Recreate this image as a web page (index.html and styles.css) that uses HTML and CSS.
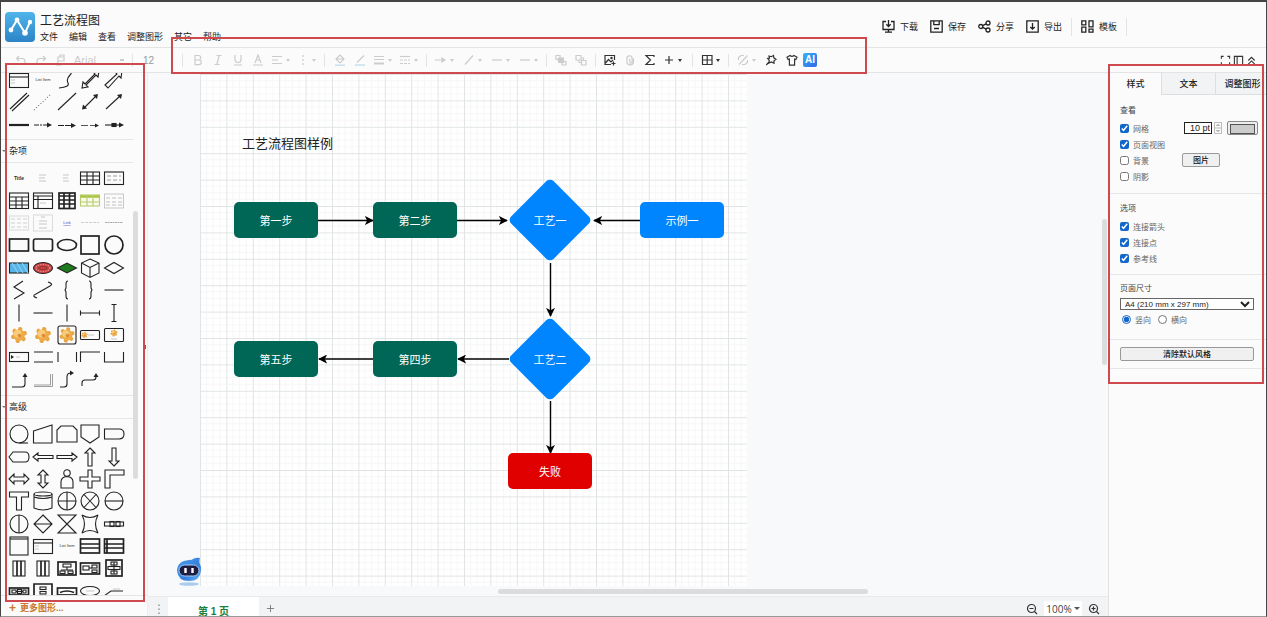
FILE: index.html
```html
<!DOCTYPE html>
<html lang="zh-CN">
<head>
<meta charset="utf-8">
<title>工艺流程图</title>
<link rel="stylesheet" href="styles.css">
</head>
<body>
<div class="app">
  <header class="header">
    <svg class="logo" viewBox="0 0 30 30" aria-hidden="true">
      <defs><linearGradient id="logoFill" x1="0" y1="0" x2="0" y2="1"><stop offset="0" stop-color="#4fb5ea"/><stop offset="1" stop-color="#2b84c6"/></linearGradient></defs>
      <rect width="30" height="30" rx="4" fill="url(#logoFill)"/>
      <path d="M6 18 12 8l8 13 5-11" fill="none" stroke="#fff" stroke-width="2"/>
      <g fill="#fff"><circle cx="6" cy="18" r="2.4"/><circle cx="12" cy="8" r="2.4"/><circle cx="20" cy="21" r="2.8"/><circle cx="25" cy="10" r="2.2"/></g>
    </svg>
    <div class="heading">
      <h1 class="title">工艺流程图</h1>
      <nav class="menu">
        <button>文件</button><button>编辑</button><button>查看</button><button>调整图形</button><button>其它</button><button>帮助</button>
      </nav>
    </div>
    <div class="actions">
      <button class="action"><svg viewBox="0 0 13 13"><path d="M4 1.5H1v8h11v-8H9M3 12.2h7M6.500 9.500v2.500M6.500 0v6M4.300 4.200l2.200 2.300 2.200-2.300"/></svg>下载</button>
      <button class="action"><svg viewBox="0 0 13 13"><path d="M.8.8h11.400v11.400H.8zM3.800 1v3.600h5.400V1M4 8.500h5"/></svg>保存</button>
      <button class="action"><svg viewBox="0 0 13 13"><circle cx="2.800" cy="6.500" r="2"/><circle cx="10" cy="3" r="2"/><circle cx="10" cy="10" r="2"/><path d="M4.600 5.600 8.200 3.900M4.600 7.400l3.600 1.700"/></svg>分享</button>
      <button class="action"><svg viewBox="0 0 13 13"><path d="M.8.8h11.400v11.400H.8zM6.500 3v6M4.300 7l2.200 2.200L8.700 7"/></svg>导出</button>
      <span class="rule"></span>
      <button class="action action--last"><svg viewBox="0 0 13 13"><path d="M.8.8h4v4h-4zM8 .8h4v6H8zM.8 7.200h4v5h-4zM8 9.200h4v3H8z"/></svg>模板</button>
      <span class="rule"></span>
    </div>
  </header>

  <div class="toolbar">
    <div class="group group--history">
      <button class="tool off" aria-label="撤销"><svg viewBox="0 0 12 12"><path d="M4 2 1.500 4.500 4 7M2 4.500h5q3 0 3 3V9"/></svg></button>
      <button class="tool off" aria-label="重做"><svg viewBox="0 0 12 12"><path d="M8 2l2.500 2.500L8 7M10 4.500H5q-3 0-3 3V9"/></svg></button>
      <button class="tool off" aria-label="格式刷"><svg viewBox="0 0 12 12"><path d="M3 3h6v4H3zM5 3V1h4v2M3 7l-1 4h5"/></svg></button>
      <select class="font" aria-label="字体" disabled><option>Arial</option></select>
    </div>
    <div class="group group--size"><input class="size" value="12" aria-label="字号"></div>
    <div class="group">
      <button class="tool off" aria-label="粗体"><svg viewBox="0 0 12 12"><path d="M3 1.500h3.500a2.200 2.200 0 010 4.500H3zM3 6h4a2.300 2.300 0 010 4.600H3z"/></svg></button>
      <button class="tool off" aria-label="斜体"><svg viewBox="0 0 12 12"><path d="M4.500 1.500h5M2.500 10.500h5M7.200 1.500l-2.400 9"/></svg></button>
      <button class="tool off" aria-label="下划线"><svg viewBox="0 0 12 12"><path d="M3 1v4.500a3 3 0 006 0V1M2 11h8"/></svg></button>
      <button class="tool off" aria-label="字体颜色"><svg viewBox="0 0 12 12"><path d="M3 9l3-8 3 8M4 6h4M1 11h10"/></svg></button>
      <button class="tool tool--menu off" aria-label="对齐"><svg viewBox="0 0 12 12"><path d="M1 2.500h10M1 6h6M1 9.500h10"/></svg></button>
      <button class="tool tool--menu off" aria-label="间距"><svg viewBox="0 0 12 12"><path d="M6 1v11" stroke-dasharray="2 2"/></svg></button>
    </div>
    <div class="group">
      <button class="tool off" aria-label="填充"><svg viewBox="0 0 12 12"><path d="M6 1l4 4-4 4-4-4zM2 5h8"/><path d="M1 11.200h10" stroke="#b9dcea"/></svg></button>
      <button class="tool off" aria-label="线条颜色"><svg viewBox="0 0 12 12"><path d="M3 8.500l7-7"/><path d="M1 11h10" stroke="#b9dcea"/></svg></button>
      <button class="tool tool--menu off" aria-label="线宽"><svg viewBox="0 0 12 12"><path d="M1 2.500h10M1 5.500h10"/><path d="M1 9.500h10" stroke-width="2"/></svg></button>
      <button class="tool tool--menu off" aria-label="线型"><svg viewBox="0 0 12 12"><path d="M1 2.500h10"/><path d="M1 6h10M1 9.500h10" stroke-dasharray="3 1"/></svg></button>
    </div>
    <div class="group group--lines">
      <button class="tool tool--menu off" aria-label="箭头"><svg viewBox="0 0 12 12"><path d="M0 6h10M7 4l3 2-3 2z"/></svg></button>
      <button class="tool tool--menu off" aria-label="连线"><svg viewBox="0 0 12 12"><path d="M2 10.500l8-9"/></svg></button>
      <button class="tool tool--menu off" aria-label="起点"><svg viewBox="0 0 12 12"><path d="M1 6h10"/></svg></button>
      <button class="tool tool--menu off" aria-label="终点"><svg viewBox="0 0 12 12"><path d="M1 6h10"/></svg></button>
    </div>
    <div class="group group--order">
      <button class="tool off" aria-label="置于顶层"><svg viewBox="0 0 12 12"><path d="M1 1.500h4v4H1zM7 7.500h4v3.500H7z"/><path d="M3.500 4h5v4.500h-5z" fill="#ccc"/></svg></button>
      <button class="tool off" aria-label="置于底层"><svg viewBox="0 0 12 12"><path d="M1 1.500h5v4.500H1zM6.500 6.500h4.500v4.500H6.500zM4 6v2.500h2.500M6 4h2.500v2.500"/></svg></button>
    </div>
    <div class="group group--insert">
      <button class="tool" aria-label="图片"><svg viewBox="0 0 12 12"><path d="M7 10.500H1v-9h9.500V6M1.500 9l3-3.500L7 8l2-2M9.500 7.500v4M7.500 9.500h4"/><circle cx="7.500" cy="4" r=".6"/></svg></button>
      <button class="tool off" aria-label="附件"><svg viewBox="0 0 12 12"><path d="M9.500 4.500v3a3.300 3.300 0 01-6.600 0V4.800a2.600 2.600 0 015.200-.8v4a1.200 1.200 0 01-2.400 0V4.500"/></svg></button>
      <button class="tool" aria-label="公式"><svg viewBox="0 0 12 12"><path d="M10 3V1.500H2L6.500 6 2 10.500h8V9"/></svg></button>
      <button class="tool tool--menu" aria-label="插入"><svg viewBox="0 0 12 12"><path d="M6 2v8M2 6h8"/></svg></button>
    </div>
    <div class="group">
      <button class="tool tool--menu" aria-label="表格"><svg viewBox="0 0 12 12"><path d="M1.500 1.500h9.500v9H1.500zM6.200 1.500v9M1.500 6H11"/></svg></button>
    </div>
    <div class="group group--last">
      <button class="tool tool--menu off" aria-label="断开"><svg viewBox="0 0 12 12"><path d="M1.500 6V3.500L4 1.500h3M10.500 6v2.500L8 10.500H5M2 10.500l8.500-9"/></svg></button>
      <button class="tool" aria-label="固定"><svg viewBox="0 0 12 12"><path d="M4 2l2.300.7L8.500 1.500l.3 2.300L11 5.200 9 6.700v2.500L6.500 8 4 9l.3-2.600L2.700 4.500l1.700-.3zM4 8l-2.700 3"/></svg></button>
      <button class="tool" aria-label="主题"><svg viewBox="0 0 12 12"><path d="M4 1.500q2 1.800 4 0l3 1.700-1.200 2.300-1.200-.4v6H3.400v-6l-1.200.4L1 3.200z"/></svg></button>
      <button class="ai" aria-label="AI">AI</button>
    </div>
    <div class="view-tools">
      <button class="tool" aria-label="全屏"><svg viewBox="0 0 12 12"><path d="M1.500 4V1.500H4M8 1.500h2.500V4M10.500 8v2.500H8M4 10.500H1.500V8"/></svg></button>
      <button class="tool" aria-label="面板"><svg viewBox="0 0 12 12"><path d="M1.500 1.500h9v9h-9zM4.500 1.500v9"/></svg></button>
      <button class="tool" aria-label="收起"><svg viewBox="0 0 12 12"><path d="M2.500 6L6 2.500 9.500 6M2.500 10L6 6.500 9.500 10"/></svg></button>
    </div>
  </div>

  <main class="body">
    <aside class="library">
      <div class="shapes">
        <div class="palette palette--first" data-set="basic"></div>
        <h2 class="section">杂项</h2>
        <div class="palette" data-set="misc"></div>
        <h2 class="section">高级</h2>
        <div class="palette" data-set="advanced"></div>
      </div>
      <span class="thumb thumb--library"></span>
      <button class="more"><b>+</b>更多图形...</button>
    </aside>

    <section class="work">
      <div class="canvas">
        <div class="paper">
          <svg class="sheet" aria-hidden="true">
            <defs>
              <pattern id="grid" width="40" height="40" patternUnits="userSpaceOnUse" patternTransform="translate(0 1) scale(.66)">
                <path d="M10 0v40M20 0v40M30 0v40M0 10h40M0 20h40M0 30h40" stroke="#f6f6f6" stroke-width="1.500"/>
                <path d="M.75 0v40M0 .75h40" stroke="#e1e4e4" stroke-width="1.500"/>
              </pattern>
              <marker id="arrow" viewBox="0 0 10 10" refX="9" refY="5" markerWidth="9" markerHeight="9" markerUnits="userSpaceOnUse" orient="auto"><path d="M0 0l10 5-10 5 2.500-5z" fill="#000" stroke="none"/></marker>
            </defs>
            <rect width="100%" height="100%" fill="url(#grid)"/>
            <g stroke="#000" stroke-width="1.400">
              <path d="M118 147.500h55" marker-end="url(#arrow)"/><path d="M257 147.500h50" marker-end="url(#arrow)"/><path d="M440 147.500h-46" marker-end="url(#arrow)"/>
              <path d="M350.500 190v53" marker-end="url(#arrow)"/><path d="M350.500 328v52" marker-end="url(#arrow)"/>
              <path d="M309 286h-51" marker-end="url(#arrow)"/><path d="M173 286h-54" marker-end="url(#arrow)"/>
            </g>
          </svg>
          <h2 class="caption">工艺流程图样例</h2>
          <div class="node node--step n1">第一步</div>
          <div class="node node--step n2">第二步</div>
          <div class="node node--choice n3"><span>工艺一</span></div>
          <div class="node node--sample n4">示例一</div>
          <div class="node node--choice n5"><span>工艺二</span></div>
          <div class="node node--step n6">第四步</div>
          <div class="node node--step n7">第五步</div>
          <div class="node node--fail n8">失败</div>
        </div>
        <span class="thumb thumb--x"></span>
        <span class="thumb thumb--y"></span>
        <span class="grip"></span>
        <svg class="robot" viewBox="0 0 26 30" aria-hidden="true">
          <defs><linearGradient id="bot" x1="0" y1="0" x2="1" y2="1"><stop offset="0" stop-color="#4d9df0"/><stop offset=".6" stop-color="#377fdc"/><stop offset="1" stop-color="#69b5f7"/></linearGradient></defs>
          <ellipse cx="13" cy="27" rx="10" ry="1.800" fill="#a9cbed"/>
          <path d="M13 3q3 0 5-1.500Q20 .5 24 1q-1 2-.5 5 2 3 1.500 8-1 10-12 10T1 14Q1 4 13 3z" fill="url(#bot)"/>
          <rect x="3" y="8" width="20" height="11" rx="5.500" fill="#1e1c3f" stroke="#9fd0ff"/>
          <path d="M9.500 11v5M16.500 11v5" stroke="#fff" stroke-width="2.400"/>
        </svg>
      </div>
      <footer class="pages">
        <svg class="dots" viewBox="0 0 20 12" aria-hidden="true"><path d="M11 1.500v10" stroke="#888" stroke-width="1.300" stroke-dasharray="1.500 2.500"/></svg>
        <button class="page">第 1 页</button>
        <button class="add" aria-label="添加页面"><svg viewBox="0 0 10 10"><path d="M5 1v8M1 5h8"/></svg></button>
        <div class="zoom">
          <button class="tool" aria-label="缩小"><svg viewBox="0 0 12 12"><circle cx="5.500" cy="5.500" r="4"/><path d="M8.500 8.500l2.500 2.500M3.500 5.500h4"/></svg></button>
          <button class="percent">100%</button>
          <button class="tool" aria-label="放大"><svg viewBox="0 0 12 12"><circle cx="5.500" cy="5.500" r="4"/><path d="M8.500 8.500l2.500 2.500M3.500 5.500h4M5.500 3.500v4"/></svg></button>
        </div>
      </footer>
    </section>

    <aside class="format">
      <div class="tabs"><button class="tab tab--on">样式</button><button class="tab">文本</button><button class="tab">调整图形</button></div>
      <section class="block block--view">
        <h3 class="label">查看</h3>
        <div class="line"><label class="opt"><input type="checkbox" checked>网格</label>
          <span class="grid-size"><input class="points" value="10 pt" aria-label="网格大小"><svg class="stepper" viewBox="0 0 8 12" aria-hidden="true"><path d="M.5.5h7v11h-7zM0 6h8" stroke="#bbb"/><path d="M2.500 4L4 2.500 5.500 4M2.500 8L4 9.500 5.500 8" stroke="#777"/></svg><button class="swatch" aria-label="网格颜色"></button></span></div>
        <div class="line"><label class="opt"><input type="checkbox" checked>页面视图</label></div>
        <div class="line"><label class="opt"><input type="checkbox">背景</label><button class="push push--image">图片</button></div>
        <div class="line"><label class="opt"><input type="checkbox">阴影</label></div>
      </section>
      <section class="block">
        <h3 class="label">选项</h3>
        <div class="line"><label class="opt"><input type="checkbox" checked>连接箭头</label></div>
        <div class="line"><label class="opt"><input type="checkbox" checked>连接点</label></div>
        <div class="line"><label class="opt"><input type="checkbox" checked>参考线</label></div>
      </section>
      <section class="block block--size">
        <h3 class="label">页面尺寸</h3>
        <select class="paper-size" aria-label="页面尺寸"><option>A4 (210 mm x 297 mm)</option></select>
        <div class="line"><label class="opt"><input type="radio" name="dir" checked>竖向</label><label class="opt"><input type="radio" name="dir">横向</label></div>
      </section>
      <section class="block block--reset"><button class="push">清除默认风格</button></section>
    </aside>
  </main>
  <div class="mark mark--library"></div>
  <div class="mark mark--toolbar"></div>
  <div class="mark mark--format"></div>
</div>
<script src="shapes.js"></script>
</body>
</html>
```

FILE: styles.css
```css
* { box-sizing: border-box; }
body {
  margin: 0;
  font-family: "Liberation Sans", "Noto Sans CJK SC", sans-serif;
  font-size: 9px;
  color: #222;
}
button, input, select { font: inherit; color: inherit; margin: 0; }
button { padding: 0; border: 0; background: none; white-space: nowrap; }
h1, h2, h3 { margin: 0; font-weight: 400; }
svg { display: block; fill: none; stroke: none; }

.app {
  position: relative;
  display: flex;
  flex-direction: column;
  height: 100vh;
  overflow: hidden;
  background: #fbfbfb;
  border: 1px solid #444;
  border-top-width: 2px;
  border-bottom-color: #999;
}

/* header */
.header { display: flex; align-items: center; height: 46px; flex: none; padding: 4px 142px 0 4px; border-bottom: 1px solid #e2e4e5; }
.logo { width: 30px; height: 30px; margin-right: 5px; }
.heading { padding-top: 3px; }
.title { font-size: 12px; line-height: 18px; }
.menu { display: flex; gap: 11px; line-height: 14px; }
.actions { display: flex; align-items: center; gap: 12px; margin-left: auto; }
.action { display: flex; align-items: center; gap: 5px; line-height: 14px; }
.action svg { width: 13px; height: 13px; stroke: #222; stroke-width: 1.3; }
.rule { width: 1px; height: 18px; margin: 0 -3px; background: #e2e4e5; }

/* toolbar */
.toolbar { display: flex; align-items: center; height: 25px; flex: none; border-bottom: 1px solid #e2e4e5; }
.group { display: flex; align-items: center; height: 13px; padding: 0 4px 0 5px; border-right: 1px solid #e4e4e4; }
.group--history { padding-left: 10px; padding-right: 8px; }
.group--size { padding-left: 10px; width: 50px; }
.group--lines { gap: 2px; }
.group--order { padding-left: 4px; }
.group--insert { padding: 0 6px 0 4px; }
.group--last { border-right: 0; gap: 1px; }
.tool { display: flex; align-items: center; justify-content: center; width: 20px; height: 20px; color: #333; }
.tool svg { width: 12px; height: 12px; stroke: currentColor; stroke-width: 1.2; }
.tool--menu { width: 26px; justify-content: flex-start; padding-left: 3px; gap: 3px; }
.tool--menu::after { content: ""; border: 2px solid transparent; border-top: 3px solid; border-bottom: 0; }
.off { color: #ccc; }
.font { width: 50px; margin-left: 3px; padding: 0; appearance: none; border: 0; background: linear-gradient(#ccc, #ccc) 46px 5px / 4px 2px no-repeat; font-size: 11px; color: #ccc; opacity: 1; }
.size { width: 20px; padding: 0; border: 0; background: none; font-size: 10px; color: #999; }
.ai { width: 14px; height: 14px; border-radius: 2px; background: linear-gradient(135deg, #35b3f5, #3167e8); color: #fff; font-size: 10px; font-weight: 700; line-height: 14px; }
.view-tools { display: flex; margin-left: auto; margin-right: 8px; }
.view-tools .tool { width: 13px; }
.view-tools svg { width: 11px; height: 11px; }

.body { display: flex; flex: 1; min-height: 0; }

/* shape library */
.library { position: relative; display: flex; flex-direction: column; width: 147px; flex: none; border-right: 1px solid #eceeef; }
.shapes { flex: 1; min-height: 0; overflow: hidden; border-bottom: 1px solid #e2e4e5; }
.palette { display: grid; grid-template-columns: repeat(5, 1fr); grid-template-rows: repeat(10, 1fr); width: 119px; height: 224px; margin: 4px 6px; }
.palette--first { grid-template-rows: repeat(3, 1fr); height: 67px; margin: -4px 6px 3px; }
.palette[data-set="advanced"] { grid-template-rows: repeat(8, 1fr); height: 179px; }
.shape { display: flex; align-items: center; justify-content: center; min-height: 0; min-width: 0; }
.shape svg { width: 24px; height: 22px; flex: none; stroke: #222; stroke-width: 1.1; }
.shape text { stroke: none; fill: #333; font-size: 4px; text-anchor: middle; }
.section { position: relative; width: 132px; padding-left: 8px; border: solid #e4e6e7; border-width: 1px 0; font-size: 9px; line-height: 22px; }
.section::before { content: ""; position: absolute; left: 1px; top: 10px; border: 2px solid transparent; border-top-color: #777; }
.more { height: 20px; flex: none; display: flex; align-items: center; gap: 4px; padding: 3px 0 0 8px; color: #c9792f; font-weight: 700; font-size: 9px; }
.more b { font-size: 12px; }
.thumb { position: absolute; border-radius: 3px; background: #dcdcde; }
.thumb--library { left: 132px; top: 138px; width: 5px; height: 268px; }
.thumb--x { left: 350px; bottom: 2px; width: 370px; height: 5px; }
.thumb--y { right: 1px; top: 146px; width: 5px; height: 146px; }
.grip { position: absolute; left: -4px; top: 272px; width: 2px; height: 4px; background: #666; }

/* canvas */
.work { display: flex; flex-direction: column; flex: 1; min-width: 0; }
.canvas { position: relative; flex: 1; background: #f8f9fb; }
.paper { position: absolute; left: 52px; top: 0; bottom: 10px; width: 547px; background: #fff; }
.sheet { width: 100%; height: 100%; }
.caption { position: absolute; left: 42px; top: 62px; font-size: 13px; line-height: 18px; }
.node { position: absolute; display: grid; place-items: center; width: 84px; height: 36px; border-radius: 5px; color: #fff; font-size: 11px; }
.node--step { background: #006756; }
.node--sample { background: #0085ff; }
.node--fail { background: #e00000; }
.node--choice { width: 82px; height: 82px; }
.node--choice::before { content: ""; position: absolute; inset: 11px; border-radius: 5px; background: #0085ff; transform: rotate(45deg); }
.node--choice span { position: relative; }
.n1 { left: 34px; top: 129px; }
.n2 { left: 173px; top: 129px; }
.n3 { left: 309px; top: 106px; }
.n4 { left: 440px; top: 129px; }
.n5 { left: 309px; top: 245px; }
.n6 { left: 173px; top: 268px; }
.n7 { left: 34px; top: 268px; }
.n8 { left: 308px; top: 380px; }
.robot { position: absolute; left: 28px; bottom: 9px; width: 26px; height: 30px; }

/* page bar */
.pages { display: flex; align-items: center; height: 20px; flex: none; background: #f1f3f4; border-top: 1px solid #e8eaeb; }
.dots { width: 20px; height: 12px; margin-top: 4px; }
.page { width: 91px; align-self: stretch; padding-top: 6px; background: #fff; color: #188038; font-size: 10px; font-weight: 700; }
.add { width: 22px; }
.add svg { width: 9px; height: 9px; margin: 3px auto 0; stroke: #777; }
.zoom { display: flex; align-items: center; align-self: stretch; gap: 2px; margin-left: auto; padding: 4px 4px 0 0; }
.percent { display: flex; align-items: center; justify-content: center; gap: 2px; width: 38px; background: #fff; font-family: "Open Sans", sans-serif; font-size: 10px; line-height: 16px; color: #444; }
.percent::after { content: ""; border: 3px solid transparent; border-top-color: #555; border-bottom: 0; }

/* format panel */
.format { width: 158px; flex: none; overflow: hidden; border-left: 1px solid #e0e2e3; font-size: 8px; color: #666; }
.tabs { display: flex; height: 22px; }
.tab { flex: 0 0 54px; border: solid #dcdedf; border-width: 0 0 1px 1px; background: #f1f3f4; font-size: 9px; font-weight: 500; color: #222; }
.tab--on { flex-basis: 52px; border-color: transparent; background: none; }
.block { padding: 9px 12px 8px 11px; border-bottom: 1px solid #e4e6e7; }
.block--view { padding-top: 10px; padding-bottom: 9px; }
.block--size { padding-top: 8px; padding-bottom: 11px; }
.block--reset { padding: 7px 12px 7px 11px; }
.label { font-size: 8px; line-height: 12px; margin-bottom: 3px; color: #444; }
.line { display: flex; align-items: center; height: 16px; }
.block--size .line { gap: 5px; height: 18px; }
.opt { display: flex; align-items: center; gap: 4px; }
.opt input { width: 9px; height: 9px; accent-color: #1267c8; }
.opt input[type="radio"] { margin-left: 2px; }
.grid-size { display: flex; align-items: center; gap: 2px; margin-left: auto; margin-right: -4px; }
.points { width: 28px; height: 12px; padding: 0 1px; border: 1px solid #222; background: #fff; font-size: 9px; text-align: right; color: #222; }
.stepper { width: 8px; height: 12px; margin-right: 3px; }
.swatch { width: 31px; height: 14px; padding: 2px; border: 1px solid #888; border-radius: 2px; background: #eee; }
.swatch::before { content: ""; display: block; height: 8px; border: 1px solid #555; background: #ccc; }
.push { width: 100%; height: 14px; border: 1px solid #999; border-radius: 2px; background: #f0f0f0; color: #111; font-size: 8px; font-weight: 500; line-height: 11px; }
.push--image { width: 38px; margin-left: auto; margin-right: 34px; }
.paper-size { display: block; width: 100%; height: 12px; padding: 0; border: 1px solid #666; border-radius: 0; background: #fff; font-size: 8px; color: #222; }

/* highlighted regions */
.mark { position: absolute; border: 2px solid #cf4a4e; pointer-events: none; }
.mark--library { left: 4px; top: 61px; bottom: 14px; width: 140px; }
.mark--toolbar { left: 170px; top: 35px; width: 696px; height: 37px; }
.mark--format { right: 2px; top: 62px; width: 156px; height: 320px; }
```

FILE: shapes.js
```js
const box = (x, y, w, h, extra = '') => `<rect x="${x}" y="${y}" width="${w}" height="${h}" ${extra}/>`;
const line = (d, extra = '') => `<path d="${d}" ${extra}/>`;
const text = (value, x = 12, y = 12, extra = '') => `<text x="${x}" y="${y}" ${extra}>${value}</text>`;
const oval = (rx, ry, extra = '') => `<ellipse cx="12" cy="11" rx="${rx}" ry="${ry}" ${extra}/>`;
const lobes = [0, 60, 120, 180, 240, 300]
  .map((a) => `<rect x="-2.300" y="-9" width="4.600" height="6" rx="1.800" fill="#e8a544" transform="rotate(${a + 12})"/>`)
  .join('');
const gear = (x, y, s) => `<g transform="translate(${x} ${y}) scale(${s})" stroke="none">${lobes}
  <circle r="6.500" fill="#eeac48"/><circle cx="-1.500" cy="-1.500" r="4.200" fill="#f8cb78"/><circle cx=".5" cy=".5" r="2" fill="#dc8a35"/></g>`;
const pale = 'stroke="#bbb" stroke-width=".8"';
const thick = 'stroke-width="1.700"';
const head = 'fill="#222" stroke="none"';

const listCard = box(2.500, 4.500, 19, 14) + line('M2.500 8h19') + line('M4 11h4M4 14h4', pale);

const sets = {
  basic: [
    listCard,
    text('List Item'),
    line('M11 0q8 2 4 6t-2 8-9 5'),
    line('M4 19l1-6 2 2L17 5l-2-2 6-1-1 6-2-2L8 16l2 2z'),
    line('M3 16L15 5l-2-2 7-1-1 7-2-2L6 19z'),
    line('M3 18L20 2M5 20L22 4'),
    line('M3 19L20 3', 'stroke-dasharray="1 2" stroke="#777"'),
    line('M3 19L21 2'),
    line('M7 16L18 5') + line('M4 18.500l1-5 4 4zM20 3l-1 5-4-4z', head),
    line('M4 18L18 5') + line('M20 3l-1 5-4-4z', head),
    line('M2 11h20', 'stroke-width="2.200"'),
    line('M3 11h14', 'stroke-dasharray="5 1 2 1"') + line('M16 8.500l5 2.500-5 2.500z', head),
    line('M3 11.500h14', 'stroke-dasharray="6 1"') + line('M16 9l5 2.500-5 2.500z', head),
    line('M3 11.500h7M12 11.500h6', 'stroke="#555"') + line('M17 9.500l4 2-4 2z', head),
    line('M3 11h15') + box(10, 9.500, 4, 3, 'fill="#222"') + line('M17 8.500l5 2.500-5 2.500z', head),
  ],
  misc: [
    text('Title', 12, 12.500, 'style="font-size:5px;font-weight:700"'),
    line('M8 8h7M8 11h6M8 14h7', pale),
    line('M8 8h6M8 11h5M8 14h6', pale),
    box(2.500, 5, 19, 12.500) + line('M2.500 9h19M2.500 13h19M9 5v12.500M15 5v12.500'),
    box(2.500, 5, 19, 12.500) + line('M5 9h14M5 13h14', 'stroke="#888" stroke-width=".8" stroke-dasharray="4 2"'),
    box(2.500, 3, 19, 15.500) + line('M2.500 7h19M2.500 11h19M2.500 15h19M9 7v11.500M15 7v11.500'),
    box(2.500, 3, 19, 15.500) + line('M2.500 6h19M2.500 9.500h19M7 6v12.500') + line('M9 13h6', pale),
    box(4, 3, 16, 15.500, thick) + line('M4 6h16M4 10h16M4 14h16M9 3v15.500M14.500 3v15.500', thick),
    box(2.500, 5, 19, 11, 'stroke="#b7cb70" fill="#f7fae8"') + line('M2.500 6.500h19', 'stroke="#a8c43c" stroke-width="2.500"') + line('M2.500 12h19M9 5v11M15 5v11', 'stroke="#b7cb70"'),
    box(2.500, 4, 19, 14, pale) + line('M4 8h16M4 12h16M4 15h16', 'stroke="#aaa" stroke-width=".7" stroke-dasharray="4 2"'),
    box(2.500, 4, 19, 14, 'stroke="#ddd"') + line('M4 7h16M4 11h16M4 15h16', 'stroke="#bbb" stroke-width=".7" stroke-dasharray="4 2"'),
    box(2.500, 3, 19, 16, 'stroke="#ddd"') + line('M10 5h4M8 9h8M8 12h8M8 16h8', pale),
    text('Link', 12, 12, 'style="fill:#4748c8;text-decoration:underline"'),
    line('M3 10.500h18', 'stroke="#bbb" stroke-width=".7" stroke-dasharray="3 1"'),
    line('M3 10.500h18', 'stroke="#888" stroke-width=".7" stroke-dasharray="2 .5"'),
    box(2.500, 5, 19, 12, thick), box(2.500, 5, 19, 12, 'rx="2" ' + thick), oval(9.500, 5.500, thick),
    box(3, 2, 18, 18, thick), oval(9, 9, thick),
    box(2.500, 6, 19, 10, 'fill="#57b4e8"') + line('M5 6l6 10M10 6l6 10M15 6l6 10', 'stroke="#8bd0f5"'),
    oval(9.500, 5.500, 'fill="#c44"') + oval(7, 3.500, 'stroke="#f2a0a0" stroke-dasharray="1 1.500"') + oval(4, 1.500, 'stroke="#622" stroke-dasharray="1 1"'),
    line('M2.500 11L12 6l9.500 5L12 16z', 'fill="#1d7a1d"'),
    line('M12 2l9 4v10l-9 4.500L3.500 16V6zM3.500 6l8.500 4.500L21 6M12 10.500v10'),
    line('M2.500 11L12 5.500l9.500 5.500L12 16.500z'),
    line('M16 2L7 8l10 6-10 6'),
    line('M17 3q6 2 2 4L5 15q-5 2 1 4'),
    line('M13 2q-2 0-2 3v4l-1 2 1 2v4q0 3 2 3'),
    line('M11 2q2 0 2 3v4l1 2-1 2v4q0 3-2 3'),
    line('M2.500 11h19'), line('M12 2.500v17'), line('M2.500 11h19'), line('M12 2.500v17'),
    line('M2.500 11h19M2.500 8.500v5M21.500 8.500v5'), line('M12 2.500v17M9.500 2.500h5M9.500 19.500h5'),
    gear(12, 11, .9), gear(12, 11, .9),
    box(3, 2, 18, 18, 'rx="2"') + gear(12, 11, .85),
    box(2.500, 6.500, 19, 9, 'rx="1"') + gear(6.500, 11, .35) + line('M10 11h6', pale),
    box(2.500, 4.500, 19, 13, 'rx="1"') + gear(12, 9, .4) + line('M9 15h6', pale),
    box(2.500, 6.500, 19, 9) + line('M4 9l3 2-3 2z', head) + line('M9 11h4', pale),
    line('M3 6h19M3 16h19'), line('M3 6v10M21.500 6v10'), line('M2.500 16V6H22'), line('M2.500 6v10h19V6'),
    line('M5 18h10q3 0 3-3V7') + line('M15.500 8L18 4l2.500 4z', head),
    line('M3 17.500h18.500V5M3 16h16.500V5', 'stroke="#888" stroke-width=".8"'),
    line('M5 18h4q3 0 3-3V8q0-4 4-4') + line('M15 1.500l4 2.500-4 2.500z', head),
    line('M4 17v-3q0-3 3-3h8q3 0 3-3') + line('M15.500 8L18 4l2.500 4z', head),
  ],
  advanced: [
    oval(9, 9) + line('M12 20h9'), line('M2.500 8L21 2v18H2.500z'), line('M6 3h12l4 4v12H2V7z'),
    line('M3 2h18v12l-9 6-9-6z'), line('M2.500 6H17q5 0 5 5t-5 5H2.500z'),
    line('M2 11l4-5h12q4 0 4 5t-4 5H6z'),
    line('M2 11l5-4v2.500h15v3H7V15z'), line('M22 11l-5-4v2.500H2v3h15V15z'),
    line('M12 2l5 5h-3v13h-4V7H7z'), line('M12 20l5-5h-3V2h-4v13H7z'),
    line('M2 11l5-5v3h10V6l5 5-5 5v-3H7v3z'), line('M12 2l5 5h-3v8h3l-5 5-5-5h3V7H7z'),
    '<circle cx="12" cy="5" r="3.200"/>' + line('M6 20v-6q0-5 6-5.500 6 .5 6 5.500v6z'),
    line('M10 2h4v7h8v4h-8v7h-4v-7H2V9h8z'), line('M3 2h19v5H8v13H3z'),
    line('M2.500 2h19v5h-7v13h-5V7h-7z'),
    line('M3 4v14q9 4 18 0V4M3 7q9 3 18 0') + '<ellipse cx="12" cy="4" rx="9" ry="2"/>',
    oval(9, 9) + line('M12 2v18M3 11h18'), oval(9, 9) + line('M6 4.500l12 13M18 4.500l-12 13'), oval(9, 9) + line('M3 11h18'),
    oval(9, 9) + line('M12 2v18'), line('M12 2l9 9-9 9-9-9zM3 11h18'), line('M3 2h18L3 20h18z'),
    line('M4 2q8 5 16 0-5 9 0 18-8-5-16 0 5-9 0-18z'),
    box(2.500, 9, 19, 4) + box(8, 8.500, 4, 5) + box(14, 8.500, 4, 5),
    box(3, 2, 18, 18) + line('M3 4h18'), listCard, text('List Item'),
    box(2.500, 4, 19, 14, thick) + line('M2.500 9h19M2.500 13h19', thick), box(2.500, 4, 19, 14, thick) + line('M2.500 9h19M2.500 13h19M5 4v14', thick),
    box(6, 4, 12, 15) + line('M10 4v15M14 4v15', thick), box(6, 4, 12, 15) + line('M10 4v15M14 4v15', thick),
    box(3, 5, 18, 13, thick) + box(8, 7, 8, 3) + line('M12 10v3M6 13h12') + box(5, 14, 5, 2.500) + box(13, 14, 5, 2.500),
    box(2.500, 6, 19, 11, thick) + box(5, 9, 6, 4) + line('M11 11h3') + box(14, 8, 5, 3) + box(14, 13, 5, 2.500),
    box(4, 3, 16, 16, thick) + box(9, 5, 6, 3) + box(6, 9.500, 12, 3) + box(9, 14, 6, 3) + line('M12 5v12'),
    box(2.500, 8, 19, 7, thick) + box(5, 10, 4, 3) + box(10.500, 9.500, 4, 4) + box(16, 10, 3, 3) + line('M9 11.500h7'),
    line('M3 22V4h18v18', thick) + box(9, 7, 6, 2.500) + box(9, 11.500, 6, 2.500),
    box(2.500, 8, 19, 7, thick) + line('M5 12.500q7-3 14 0', thick),
    oval(9.500, 4.500) + line('M8 11h8', pale), line('M2 16l7-5h12') + line('M11 9h7', pale),
  ],
};

document.querySelectorAll('.palette').forEach((palette) => {
  palette.innerHTML = sets[palette.dataset.set]
    .map((art) => `<button class="shape"><svg viewBox="0 0 24 22">${art}</svg></button>`)
    .join('');
});
```
